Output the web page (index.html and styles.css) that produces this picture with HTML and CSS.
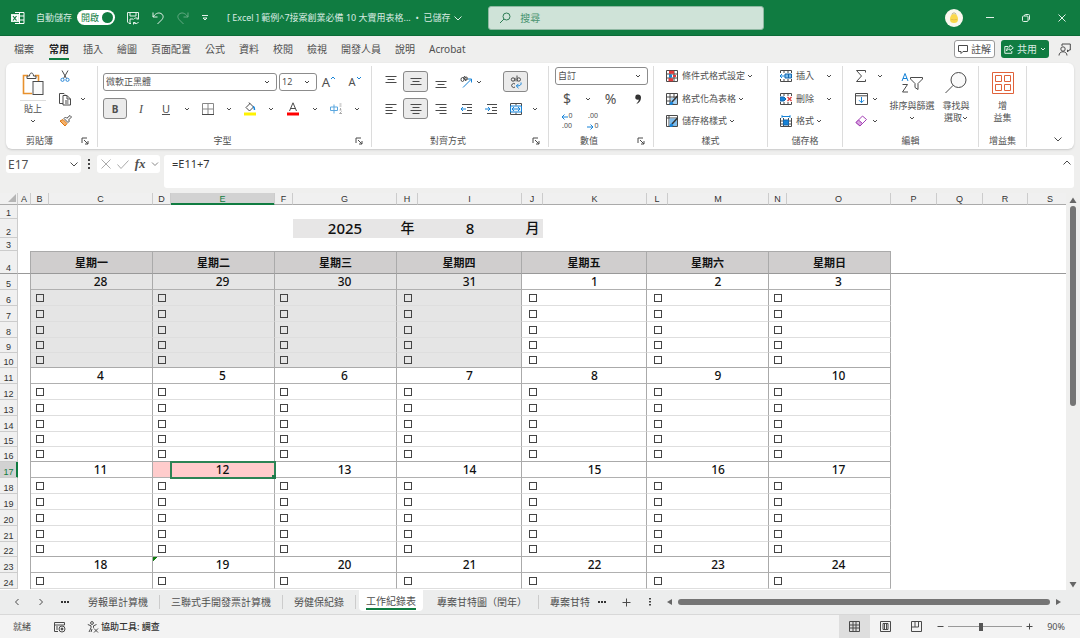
FILE: index.html
```html
<!DOCTYPE html>
<html lang="zh-Hant">
<head>
    <meta charset="UTF-8">
    <meta name="viewport" content="width=device-width, initial-scale=1.0">
    <title>Excel - 工作紀錄表</title>
    <link rel="stylesheet" href="styles.css">
</head>
<body>
    <!-- shared icons -->
    <svg class="sprite" aria-hidden="true">
        <symbol id="chev" viewBox="0 0 6 6"><path d="M1 2l2 2 2-2"/></symbol>
        <symbol id="launch" viewBox="0 0 8 8"><path d="M1 6V1h5M3 3l4 4M7 4v3H4"/></symbol>
    </svg>

    <!-- title bar -->
    <header class="titlebar">
        <svg class="logo" width="14" height="14" viewBox="0 0 14 14"><path d="M4 1.500h9v11H4M8.500 1.500v11M4 5h9M4 9h9" fill="none" stroke="#fff"/><rect y="3.500" width="7.500" height="7" fill="#fff"/><path d="M2 5l3.500 4.500M5.500 5L2 9.500" stroke="#107c41" stroke-width="1.200"/></svg>
        <span class="autosave">自動儲存</span>
        <button class="toggle">開啟<i></i></button>
        <button class="quick" aria-label="儲存"><svg width="14" height="14" viewBox="0 0 14 14"><path d="M5 12.500H3l-1.500-1.500V1.500h11V6M4 1.500V5h6V1.500M4 12V8h3M7.500 8.500a3 3 0 0 1 5-.5V6M12.500 8h-2M12.500 11a3 3 0 0 1-5 .5v2M7.500 11.500h2"/></svg></button>
        <button class="quick" aria-label="復原"><svg width="14" height="14" viewBox="0 0 14 14"><path d="M2 1.500V6h4.500M2 6c2-3 5-5 8-3.500 3 1.800 2.500 4.500.5 6.500l-4 4"/></svg></button>
        <button class="quick faded" aria-label="取消復原"><svg width="14" height="14" viewBox="0 0 14 14"><path d="M12 1.500V6H7.500M12 6c-2-3-5-5-8-3.500-3 1.800-2.500 4.500-.5 6.500l4 4"/></svg></button>
        <button class="quick small" aria-label="自訂"><svg width="8" height="8" viewBox="0 0 8 8"><path d="M1 1.500h6M2 4l2 2 2-2z"/></svg></button>
        <span class="filename">[ Excel ] 範例^7接案創業必備 10 大實用表格...&nbsp; • &nbsp;已儲存</span>
        <svg class="name-chev" width="10" height="10" viewBox="0 0 10 10"><path d="M1.500 3.500L5 7l3.500-3.500"/></svg>
        <label class="search">
            <svg width="12" height="12" viewBox="0 0 12 12"><circle cx="7.500" cy="4.500" r="3.500"/><path d="M5 7L1 11"/></svg>
            <input type="text" placeholder="搜尋" aria-label="搜尋">
        </label>
        <div class="window-buttons">
            <span class="avatar"><svg width="18" height="18" viewBox="0 0 18 18"><path d="M9 5c3 0 4 3 4 5.500S11.500 14 9 14s-4-1-4-3.500S6 5 9 5z" fill="#fbd84c" stroke="none"/><path d="M7 5.500c0-2 4-2 4 0M7 10v.8M11 10v.8" stroke="#9b8b50" stroke-width=".7" fill="none"/><path d="M8.300 10.500h1.400l-.7.900z" fill="#e8893a" stroke="none"/></svg></span>
            <button aria-label="最小化"><svg width="10" height="10" viewBox="0 0 10 10"><path d="M1 4.500h8"/></svg></button>
            <button aria-label="還原"><svg width="10" height="10" viewBox="0 0 10 10"><rect x="1.500" y="3" width="5.500" height="5.500" rx="1"/><path d="M3.500 3V2.500a1 1 0 0 1 1-1H7.500a1 1 0 0 1 1 1V6a1 1 0 0 1-1 1"/></svg></button>
            <button aria-label="關閉"><svg width="10" height="10" viewBox="0 0 10 10"><path d="M1.500 1.500l7 7M8.500 1.500l-7 7"/></svg></button>
        </div>
    </header>

    <!-- ribbon tabs -->
    <nav class="tabs">
        <button>檔案</button>
        <button class="active">常用</button>
        <button>插入</button>
        <button>繪圖</button>
        <button>頁面配置</button>
        <button>公式</button>
        <button>資料</button>
        <button>校閱</button>
        <button>檢視</button>
        <button>開發人員</button>
        <button>說明</button>
        <button>Acrobat</button>
        <div class="tab-actions">
            <button class="comment"><svg width="10" height="10" viewBox="0 0 10 10"><path d="M.5 1.500h9v6H5L3 9.500v-2H.5z"/></svg>註解</button>
            <button class="share"><svg width="10" height="10" viewBox="0 0 10 10"><path d="M4 2.500H.8v6.800h7V7M6 1l3.300 2.800L6 6.500V5C4 5 3 6 2.500 7 2.500 4.500 4 2.700 6 2.700z"/></svg>共用<svg class="chev"><use href="#chev"/></svg></button>
            <button class="present" aria-label="共同作業"><svg width="13" height="13" viewBox="0 0 13 13"><circle cx="5" cy="6" r="2.200"/><path d="M1 12.500c0-5 8-5 8 0M4 3V1h8.300v6H11l-1.500 2V7H9"/></svg></button>
        </div>
    </nav>

    <!-- ribbon -->
    <section class="ribbon">
        <div class="group clipboard">
            <div class="body split">
                <button class="big">
                    <svg width="22" height="24" viewBox="0 0 22 24"><path d="M6 3.500H1.500v18H10" stroke="#e8912d" stroke-width="1.600"/><path d="M13 3.500h3.500V9" stroke="#e8912d" stroke-width="1.600"/><path d="M5 6.500V4h2.500c0-4 4-4 4 0H14v2.500z"/><rect x="11" y="9.500" width="10" height="13" fill="#fafafa"/></svg>
                    <span class="rule"></span>
                    <span>貼上</span>
                    <svg class="chev"><use href="#chev"/></svg>
                </button>
                <div class="lines">
                    <div class="line"><button class="tool" aria-label="剪下"><svg width="12" height="12" viewBox="0 0 12 12"><path d="M3 .5l4.500 8M9 .5l-4.500 8"/><g stroke="#2b88d8"><circle cx="3.500" cy="9.800" r="1.600"/><circle cx="8.500" cy="9.800" r="1.600"/></g></svg></button></div>
                    <div class="line"><button class="tool" aria-label="複製"><svg width="14" height="14" viewBox="0 0 14 14"><path d="M5 11.500H1.500v-10H6l1 1M5 3.500h4l3.500 3.500v6H5zM9 3.500V7h3.500M7 9h3.500M7 11h3.500"/></svg></button><svg class="chev"><use href="#chev"/></svg></div>
                    <div class="line"><button class="tool" aria-label="複製格式"><svg width="13" height="12" viewBox="0 0 13 12"><path d="M1 6l5 5 2-2.500L4 4.500z" fill="#f6b26b" stroke="#d9730d"/><path d="M5 3.500l4 4 1.500-1.500-1-1L12.500 2 11 .5 7.800 3.300 6.500 2z"/></svg></button></div>
                </div>
            </div>
            <div class="caption"><span>剪貼簿</span><button aria-label="剪貼簿設定"><svg><use href="#launch"/></svg></button></div>
        </div>

        <div class="group font">
            <div class="body two">
                <div class="line">
                    <select class="face" aria-label="字型"><option>微軟正黑體</option></select>
                    <select class="size" aria-label="字型大小"><option>12</option></select>
                    <button class="tool grow" aria-label="放大字型">A<svg><path d="M1 4l2-2 2 2" stroke="#1683d8"/></svg></button>
                    <button class="tool grow less" aria-label="縮小字型">A<svg><path d="M1 2l2 2 2-2" stroke="#1683d8"/></svg></button>
                </div>
                <div class="line">
                    <button class="tool on bold">B</button>
                    <button class="tool italic">I</button>
                    <button class="tool under">U</button>
                    <svg class="chev"><use href="#chev"/></svg>
                    <button class="tool" aria-label="框線"><svg width="12" height="12" viewBox="0 0 12 12"><path d="M.5 11V.5h11V11M6 .5V11M.5 6h11" stroke="#888"/><path d="M0 11.500h12"/></svg></button>
                    <svg class="chev"><use href="#chev"/></svg>
                    <button class="tool" aria-label="填滿色彩"><svg width="12" height="14" viewBox="0 0 12 14"><path d="M2 5.500l4-4 3.500 3.500L5.500 9zM5 .5L6 2"/><path d="M9 4.500c1.500.5 1.500 2 1.500 3.500" stroke="#1683d8" stroke-width="1.500"/><path d="M0 12h12" stroke="#fff200" stroke-width="3"/></svg></button>
                    <svg class="chev"><use href="#chev"/></svg>
                    <button class="tool wide" aria-label="字型色彩"><svg width="12" height="14" viewBox="0 0 12 14"><path d="M2.500 9L6 .8 9.500 9M3.800 6.500h4.400"/><path d="M0 12h12" stroke="#f00" stroke-width="3"/></svg></button>
                    <svg class="chev"><use href="#chev"/></svg>
                    <button class="tool" aria-label="注音標示"><svg width="13" height="12" viewBox="0 0 13 12"><path d="M.5 4h7v3.500h-7zM4 1.500v9" stroke="#5ba7df"/><path d="M9.500 1h2M9.500 3h2M10.500 5v2M9.500 7h2M11.500 8.500l-2 2h2.500" stroke="#aaa"/></svg></button>
                    <svg class="chev"><use href="#chev"/></svg>
                </div>
            </div>
            <div class="caption"><span>字型</span><button aria-label="字型設定"><svg><use href="#launch"/></svg></button></div>
        </div>

        <div class="group align">
            <div class="body two">
                <div class="line">
                    <button class="tool" aria-label="靠上"><svg width="12" height="12" viewBox="0 0 12 12"><path d="M.5.5h11M2.500 3.500h7M.5 6.500h11"/></svg></button>
                    <button class="tool on" aria-label="置中對齊"><svg width="12" height="12" viewBox="0 0 12 12"><path d="M.5 2.500h11M2.500 5.500h7M.5 8.500h11"/></svg></button>
                    <button class="tool" aria-label="靠下"><svg width="12" height="12" viewBox="0 0 12 12"><path d="M.5 5.500h11M2.500 8.500h7M.5 11.500h11"/></svg></button>
                    <button class="tool" aria-label="方向"><svg width="14" height="14" viewBox="0 0 14 14"><ellipse cx="3.500" cy="4.500" rx="1.500" ry="2"/><path d="M4 2l3 4"/><circle cx="7" cy="3.500" r="1.500"/><path d="M5 1l3 3.500"/><path d="M4 12.500l8-8M9 4h3.500v3.500" stroke="#1683d8"/></svg></button>
                    <svg class="chev near"><use href="#chev"/></svg>
                    <button class="tool on" aria-label="自動換行"><svg width="12" height="14" viewBox="0 0 12 14"><circle cx="3" cy="4.500" r="1.700"/><path d="M5 2.800v3.500M7 .5v6"/><circle cx="8.800" cy="4.500" r="1.700"/><path d="M5 9a2 2 0 1 0 0 3"/><path d="M11 7.500c.5 2-.5 3.500-4.500 3.500M8.500 8.800L6.300 11l2.200 2.200" stroke="#1683d8"/></svg></button>
                </div>
                <div class="line">
                    <button class="tool" aria-label="靠左"><svg width="12" height="12" viewBox="0 0 12 12"><path d="M.5 1.500h11M.5 4.500h7M.5 7.500h11M.5 10.500h7"/></svg></button>
                    <button class="tool on" aria-label="置中"><svg width="12" height="12" viewBox="0 0 12 12"><path d="M.5 1.500h11M2.500 4.500h7M.5 7.500h11M2.500 10.500h7"/></svg></button>
                    <button class="tool" aria-label="靠右"><svg width="12" height="12" viewBox="0 0 12 12"><path d="M.5 1.500h11M4.500 4.500h7M.5 7.500h11M4.500 10.500h7"/></svg></button>
                    <button class="tool" aria-label="減少縮排"><svg width="12" height="12" viewBox="0 0 12 12"><path d="M2 1.500h10M7 4.500h5M7 7.500h5M2 10.500h10"/><path d="M6 6H1M3 4L1 6l2 2" stroke="#1683d8"/></svg></button>
                    <button class="tool" aria-label="增加縮排"><svg width="12" height="12" viewBox="0 0 12 12"><path d="M2 1.500h10M7 4.500h5M7 7.500h5M2 10.500h10"/><path d="M0 6h5M3 4l2 2-2 2" stroke="#1683d8"/></svg></button>
                    <button class="tool" aria-label="跨欄置中"><svg width="12" height="12" viewBox="0 0 12 12"><path d="M.5.5h11v11H.5zM6 .5v2M6 9.500v2"/><path d="M.5 3h11v6H.5z" fill="#eaf4fc" stroke="#1683d8"/><path d="M2 6h8M4 4L2 6l2 2M8 4l2 2-2 2" stroke="#1683d8"/></svg></button>
                    <svg class="chev end"><use href="#chev"/></svg>
                </div>
            </div>
            <div class="caption"><span>對齊方式</span><button aria-label="對齊設定"><svg><use href="#launch"/></svg></button></div>
        </div>

        <div class="group number">
            <div class="body lines">
                <div class="line"><select class="format" aria-label="數值格式"><option>自訂</option></select></div>
                <div class="line symbols">
                    <button class="tool">$</button>
                    <svg class="chev"><use href="#chev"/></svg>
                    <button class="tool wide">%</button>
                    <button class="tool wide" aria-label="千分位"><svg width="8" height="12" viewBox="0 0 8 12"><path d="M4 1.500a2.600 2.600 0 0 0-.3 5.200c.5 0 .9-.1 1.200-.3C4.700 8 4 9 2.500 10.200l.5.6C6 9.500 7 7 7 4.500 7 2.500 5.800 1.500 4 1.500z" fill="#333" stroke="none"/></svg></button>
                </div>
                <div class="line">
                    <button class="tool decimals" aria-label="增加小數位數"><span><svg width="7" height="7" viewBox="0 0 7 7"><path d="M7 4H1M3.500 1.500L1 4l2.500 2.500"/></svg>0</span><span>.00</span></button>
                    <button class="tool decimals" aria-label="減少小數位數"><span>.00</span><span><svg width="7" height="7" viewBox="0 0 7 7"><path d="M0 4h6M3.500 1.500L6 4 3.500 6.500"/></svg>0</span></button>
                </div>
            </div>
            <div class="caption"><span>數值</span><button aria-label="數值設定"><svg><use href="#launch"/></svg></button></div>
        </div>

        <div class="group named style">
            <div class="body lines">
                <button class="line"><svg width="12" height="12" viewBox="0 0 12 12"><path d="M.5.5h11v11H.5zM.5 4h11M.5 8h11M4 .5v11M8 .5v11"/><path d="M3 2.200h5M2.500 9.800H7" stroke="#e23a3a" stroke-width="3"/><path d="M3 6h3" stroke="#1683d8" stroke-width="3"/><path d="M7 6h3" stroke="#e23a3a" stroke-width="2"/></svg>條件式格式設定<svg class="chev"><use href="#chev"/></svg></button>
                <button class="line"><svg width="12" height="12" viewBox="0 0 12 12"><path d="M.5.5h11v11H.5zM.5 4h11M.5 8h11M4 .5v11M8 .5v11"/><path d="M5 5h6v6H5z" fill="#a6d0f2" stroke="none"/><path d="M11.500 3L6 9" stroke="#333" stroke-width="1.500"/><path d="M4 11.500c-.5-2 1.500-3.500 2.500-2s-.5 2.500-2.500 2z" fill="#1683d8" stroke="#1683d8"/></svg>格式化為表格<svg class="chev"><use href="#chev"/></svg></button>
                <button class="line"><svg width="12" height="12" viewBox="0 0 12 12"><path d="M.5.5h11v11H.5zM.5 3h11M3 .5v11"/><path d="M3.500 3.500h7.500V11H3.500z" fill="#7dbcec" stroke="none"/><path d="M11.500 3L6 9" stroke="#333" stroke-width="1.500"/><path d="M4 11.500c-.5-2 1.500-3.500 2.500-2s-.5 2.500-2.500 2z" fill="#1683d8" stroke="#1683d8"/></svg>儲存格樣式<svg class="chev"><use href="#chev"/></svg></button>
            </div>
            <div class="caption"><span>樣式</span></div>
        </div>

        <div class="group named cells">
            <div class="body lines">
                <button class="line"><svg width="12" height="12" viewBox="0 0 12 12"><path d="M.5 3V.5h11V3M.5 9v2.500h11V9M4 .5V3M8 .5V3M4 9v2.500M8 9v2.500"/><path d="M5 4h6.500v4H5zM8.500 4v4" fill="#7dbcec" stroke="#1567ad"/><path d="M5 6H0M2 4L0 6l2 2" stroke="#1683d8"/></svg>插入<svg class="chev far"><use href="#chev"/></svg></button>
                <button class="line"><svg width="12" height="12" viewBox="0 0 12 12"><path d="M.5 3V.5h11V3M.5 9v2.500h11V9M4 .5V3M8 .5V3M4 9v2.500M8 9v2.500"/><path d="M0 4h4l2 2-2 2H0z" fill="#1683d8" stroke="#1567ad"/><path d="M7.500 4l4 4M11.500 4l-4 4" stroke="#e23a3a" stroke-width="1.300"/></svg>刪除<svg class="chev far"><use href="#chev"/></svg></button>
                <button class="line"><svg width="12" height="12" viewBox="0 0 12 12"><path d="M.5 3v8.500h11V3M.5 6h11M.5 9h11M3.500 3v8.500M8.500 3v8.500"/><path d="M3.500 5h5v5h-5z" fill="#1683d8" stroke="#1567ad"/><path d="M2 1.500h8M2 .2v2.600M10 .2v2.600" stroke="#1683d8"/></svg>格式<svg class="chev"><use href="#chev"/></svg></button>
            </div>
            <div class="caption"><span>儲存格</span></div>
        </div>

        <div class="group edit">
            <div class="body split">
                <div class="lines">
                    <div class="line"><button class="tool" aria-label="自動加總"><svg width="12" height="12" viewBox="0 0 12 12"><path d="M10.500 2.500v-2h-9L6.500 6l-5 5.500h9v-2"/></svg></button><svg class="chev far"><use href="#chev"/></svg></div>
                    <div class="line"><button class="tool" aria-label="填滿"><svg width="13" height="12" viewBox="0 0 13 12"><path d="M.5.5h12v11H.5zM.5 2.800h12"/><path d="M6.500 4v5.500M4 7.200l2.500 2.500L9 7.200" stroke="#1683d8"/></svg></button><svg class="chev"><use href="#chev"/></svg></div>
                    <div class="line"><button class="tool" aria-label="清除"><svg width="12" height="12" viewBox="0 0 12 12"><path d="M1 7.500l6.500-6.500 4 3.500L5 11z" stroke="#a33fb5"/><path d="M1 7.500L3.500 5l4 3.500L5 11z" fill="#d9a6e0" stroke="#a33fb5"/></svg></button><svg class="chev"><use href="#chev"/></svg></div>
                </div>
                <button class="big">
                    <svg width="22" height="22" viewBox="0 0 22 22"><path d="M1 9l3-7.500L7 9M2 6.500h4" stroke="#1683d8"/><path d="M1.500 12.500H6.500l-5 7.500h5.500"/><path d="M9.500 5.500h12v1.500L17 11.500v6L14 15.500v-4L9.500 7z"/></svg>
                    <span>排序與篩選</span>
                    <svg class="chev"><use href="#chev"/></svg>
                </button>
                <button class="big">
                    <svg width="22" height="22" viewBox="0 0 22 22"><circle cx="13.500" cy="8" r="7.500" fill="#fafafa"/><path d="M8.200 13.300L.5 21"/></svg>
                    <span>尋找與</span>
                    <span>選取<svg class="chev"><use href="#chev"/></svg></span>
                </button>
            </div>
            <div class="caption"><span>編輯</span></div>
        </div>

        <div class="group addins">
            <div class="body">
                <button class="big">
                    <svg width="22" height="22" viewBox="0 0 22 22"><g stroke="#e0623a"><path d="M.5.500h21v21H.5z"/><path d="M3.500 3.500h6v6h-6zM12.500 3.500h6v6h-6zM3.500 12.500h6v6h-6zM12.500 12.500h6v6h-6z"/></g></svg>
                    <span>增</span>
                    <span>益集</span>
                </button>
            </div>
            <div class="caption"><span>增益集</span></div>
        </div>
        <button class="collapse" aria-label="摺疊功能區"><svg width="10" height="10" viewBox="0 0 10 10"><path d="M1.500 3.500L5 7l3.500-3.500"/></svg></button>
    </section>

    <!-- formula bar -->
    <section class="formula">
        <div class="namebox"><input type="text" value="E17" aria-label="名稱方塊"><svg width="10" height="10" viewBox="0 0 10 10"><path d="M1.500 3.500L5 7l3.500-3.500"/></svg></div>
        <svg class="dots" width="4" height="12" viewBox="0 0 4 12"><path d="M1 1h2v2H1zM1 5h2v2H1zM1 9h2v2H1z" fill="#444" stroke="none"/></svg>
        <div class="fx">
            <svg width="12" height="12" viewBox="0 0 12 12"><path d="M1.500 1.500l9 9M10.500 1.500l-9 9" stroke="#aaa"/></svg>
            <svg width="12" height="12" viewBox="0 0 12 12"><path d="M.5 6.500l3.500 4 7.500-8" stroke="#aaa"/></svg>
            <button>fx</button>
            <svg width="8" height="10" viewBox="0 0 8 10"><path d="M1 3.500l3 3 3-3" stroke="#888"/></svg>
        </div>
        <div class="formula-input"><input type="text" value="=E11+7" aria-label="公式"><svg width="10" height="10" viewBox="0 0 10 10"><path d="M1.500 6.500L5 3l3.500 3.500"/></svg></div>
    </section>

    <!-- sheet -->
    <main class="sheet">
        <div class="grid">
            <table>
                <colgroup id="cols"></colgroup>
                <thead><tr id="letters"></tr></thead>
                <tbody id="cells"></tbody>
            </table>
        </div>
        <div class="vscroll">
            <svg width="8" height="8" viewBox="0 0 8 8"><path d="M4 1.500L7.500 7h-7z"/></svg>
            <i></i>
            <svg width="8" height="8" viewBox="0 0 8 8"><path d="M4 6.500L.5 1h7z"/></svg>
        </div>
    </main>

    <!-- sheet tabs -->
    <nav class="sheets">
        <button class="nav" aria-label="上一張"><svg width="8" height="8" viewBox="0 0 8 8"><path d="M5.500 1l-3 3 3 3"/></svg></button>
        <button class="nav" aria-label="下一張"><svg width="8" height="8" viewBox="0 0 8 8"><path d="M2.500 1l3 3-3 3"/></svg></button>
        <button class="nav" aria-label="更多"><svg width="10" height="4" viewBox="0 0 10 4"><path d="M1 1h2v2H1zM4 1h2v2H4zM7 1h2v2H7z" fill="#333" stroke="none"/></svg></button>
        <button class="name">勞報單計算機</button>
        <button class="name">三聯式手開發票計算機</button>
        <button class="name">勞健保紀錄</button>
        <button class="name current"><span>工作紀錄表</span></button>
        <button class="name">專案甘特圖（閏年）</button>
        <button class="name last">專案甘特</button>
        <button class="nav" aria-label="其他工作表"><svg width="10" height="4" viewBox="0 0 10 4"><path d="M1 1h2v2H1zM4 1h2v2H4zM7 1h2v2H7z" fill="#333" stroke="none"/></svg></button>
        <button class="nav" aria-label="新增工作表"><svg width="9" height="9" viewBox="0 0 9 9"><path d="M4.500.5v8M.5 4.500h8"/></svg></button>
        <button class="nav" aria-label="調整"><svg width="4" height="10" viewBox="0 0 4 10"><path d="M1 1h2v1.500H1zM1 4h2v1.500H1zM1 7h2v1.500H1z" fill="#444" stroke="none"/></svg></button>
        <div class="hscroll">
            <svg width="8" height="8" viewBox="0 0 8 8"><path d="M1 4l5-3v6z"/></svg>
            <i></i>
            <svg width="8" height="8" viewBox="0 0 8 8"><path d="M7 4L2 1v6z"/></svg>
        </div>
    </nav>

    <!-- status bar -->
    <footer class="status">
        <span class="ready">就緒</span>
        <svg class="macro" width="12" height="12" viewBox="0 0 12 12"><path d="M4 10.500H.5v-9h10V4M.5 4h10M2 6h2M2 8h2"/><circle cx="8" cy="8" r="3"/><circle cx="8" cy="8" r="1" fill="#444"/></svg>
        <button class="access"><svg width="12" height="12" viewBox="0 0 12 12"><circle cx="5" cy="2" r="1.400"/><path d="M.8 3.500L4 4.800v2L2 11M9.500 3.500L6.500 4.800v2M5 8l-1 3M7 7.500l4 4M11 7.500l-4 4"/></svg>協助工具: 調查</button>
        <div class="views">
            <button class="on" aria-label="標準模式"><svg width="11" height="11" viewBox="0 0 11 11"><path d="M.5.5h10v10H.5zM.5 4h10M.5 7h10M4 .5v10M7 .5v10"/></svg></button>
            <button aria-label="整頁模式"><svg width="11" height="11" viewBox="0 0 11 11"><path d="M.5.5h10v10H.5zM3 2.500h5v6H3zM4.500 2.500v6M6.500 2.500v6"/></svg></button>
            <button aria-label="分頁預覽"><svg width="11" height="11" viewBox="0 0 11 11"><path d="M.5.5h10v10H.5zM.5 6h7V.5M4 .5V6"/></svg></button>
        </div>
        <button class="zoom-step" aria-label="縮小"><svg width="7" height="7" viewBox="0 0 7 7"><path d="M.5 3.500h6"/></svg></button>
        <input class="zoom" type="range" min="10" max="190" value="90" aria-label="縮放">
        <button class="zoom-step" aria-label="放大"><svg width="7" height="7" viewBox="0 0 7 7"><path d="M.5 3.500h6M3.500.5v6"/></svg></button>
        <span class="percent">90%</span>
    </footer>
    <script src="script.js"></script>
</body>
</html>
```

FILE: styles.css
```css
* {
    box-sizing: border-box;
}
body {
    margin: 0;
    height: 100vh;
    display: flex;
    flex-direction: column;
    overflow: hidden;
    background-color: #efefee;
    color: #505050;
    font: 9px/12px "Noto Sans", "Noto Sans CJK TC", sans-serif;
}
button, input, select {
    margin: 0;
    padding: 0;
    border: 0;
    background: none;
    color: inherit;
    font: inherit;
}
button {
    display: flex;
    align-items: center;
    justify-content: center;
    white-space: nowrap;
}
svg {
    display: block;
    flex: none;
    fill: none;
    stroke: #4a4a4a;
}
.sprite {
    position: absolute;
    width: 0;
    height: 0;
}
.chev {
    width: 6px;
    height: 6px;
}

/* title bar */
.titlebar {
    position: relative;
    height: 36px;
    display: flex;
    align-items: center;
    padding-left: 11px;
    background: #107c41;
    border-bottom: 1px solid #0c6b37;
    color: #d9ebe1;
}
.titlebar svg {
    stroke: #e3f1e9;
}
.autosave {
    margin: 0 5px 0 11px;
}
.toggle {
    width: 38px;
    height: 15px;
    justify-content: space-between;
    padding: 0 2px 0 4px;
    border-radius: 8px;
    background: #fff;
    color: #107c41;
}
.toggle i {
    width: 11px;
    height: 11px;
    border-radius: 50%;
    background: #107c41;
}
.quick {
    width: 14px;
    margin-left: 11px;
}
.quick.small {
    width: 8px;
}
.faded {
    opacity: .4;
}
.filename {
    margin: 0 2px 0 18px;
}
.search {
    position: absolute;
    left: 45.2%;
    width: 25.5%;
    height: 24px;
    display: flex;
    align-items: center;
    gap: 9px;
    padding-left: 10px;
    border: 1px solid #8fb8a2;
    border-radius: 3px;
    background: #cfe3d8;
}
.search svg {
    stroke: #2f7d55;
}
.search input {
    flex: 1;
    font-size: 10px;
    outline: 0;
}
.search input::placeholder {
    color: #4a9470;
}
.window-buttons {
    display: flex;
    align-items: center;
    margin-left: auto;
}
.window-buttons button {
    width: 36px;
    height: 35px;
}
.avatar {
    width: 18px;
    height: 18px;
    margin-right: 9px;
    border-radius: 50%;
    background: #fbf8ee;
}

/* ribbon tabs */
.tabs {
    height: 27px;
    display: flex;
    gap: 14px;
    padding-left: 14px;
    font-size: 10px;
}
.tabs > button {
    height: 24px;
    padding-top: 3px;
    border-bottom: 2px solid transparent;
}
.tabs .active {
    margin-left: 1px;
    border-color: #107c41;
    color: #222;
    font-weight: 700;
}
.tab-actions {
    height: 26px;
    display: flex;
    align-items: center;
    gap: 6px;
    margin-left: auto;
    padding-right: 7px;
}
.tab-actions button {
    height: 18px;
    gap: 3px;
    border-radius: 3px;
}
.tab-actions .comment {
    width: 41px;
    border: 1px solid #999;
    background: #fff;
}
.tab-actions .share {
    width: 48px;
    background: #107c41;
    color: #d9ebe1;
}
.share svg {
    stroke: #e3f1e9;
}
.tab-actions .present {
    width: 18px;
}

/* ribbon */
.ribbon {
    height: 86px;
    display: flex;
    margin: 0 6px;
    border-radius: 6px;
    background: #fff;
    box-shadow: 0 1px 2px #c8c8c8;
}
.group {
    display: flex;
    flex-direction: column;
    margin: 3px 0 2px;
    border-right: 1px solid #dcdcdc;
}
.clipboard {
    width: 92px;
}
.font {
    width: 274px;
}
.align {
    width: 177px;
}
.number {
    width: 105px;
}
.style {
    width: 114px;
}
.cells {
    width: 75px;
}
.edit {
    width: 136px;
}
.addins {
    width: 48px;
}
.body {
    flex: 1;
}
.caption {
    height: 12px;
    display: flex;
    margin-top: auto;
}
.caption span {
    flex: 1;
    text-align: center;
}
.caption button {
    width: 24px;
}
.caption svg {
    width: 8px;
    height: 8px;
}
.line {
    height: 20px;
    display: flex;
    align-items: center;
}
.lines {
    height: 65px;
    flex: none;
    display: flex;
    flex-direction: column;
    justify-content: space-between;
}
.split {
    display: flex;
}
.two {
    padding: 5px 0 0 5px;
}
.two .line {
    height: 21px;
    margin-bottom: 6px;
}
.tool {
    width: 22px;
    height: 21px;
}
.on {
    border: 1px solid #888;
    border-radius: 3px;
    background: #ebebeb;
}
.big {
    flex-direction: column;
    justify-content: flex-start;
    padding-top: 6px;
}
.big span {
    display: flex;
    align-items: center;
}
.big > svg:first-child {
    margin-bottom: 6px;
}
.clipboard .big {
    width: 54px;
}
.clipboard .big > svg:first-child {
    margin-bottom: 4px;
}
.clipboard .rule {
    width: 26px;
    margin-bottom: 2px;
    border-top: 1px solid #ddd;
}
.clipboard .tool {
    width: 10px;
}
.clipboard .line .chev {
    margin-left: 10px;
}
.clipboard .big .chev {
    margin-top: 3px;
}
select {
    height: 18px;
    padding-left: 2px;
    border: 1px solid #8c8c8c;
    border-radius: 3px;
    appearance: none;
    background: #fff url("data:image/svg+xml,%3Csvg xmlns='http://www.w3.org/2000/svg' width='6' height='6'%3E%3Cpath d='M1 2l2 2 2-2' fill='none' stroke='%23444'/%3E%3C/svg%3E") no-repeat right 6px center;
}
.face {
    width: 174px;
    margin-right: 2px;
}
.size {
    width: 38px;
}
.format {
    width: 93px;
}
.grow {
    width: 24px;
    font-size: 13px;
}
.grow svg {
    width: 6px;
    height: 6px;
    margin-bottom: 7px;
}
.less {
    margin-left: 2px;
    font-size: 11px;
}
.font .chev {
    width: 20px;
}
.wide {
    width: 24px;
}
.bold {
    width: 24px;
    font-size: 10px;
    font-weight: 700;
}
.italic {
    width: 28px;
    font: italic 12px/12px "Liberation Serif", serif;
}
.under {
    font-size: 11px;
    text-decoration: underline;
}
.align .body {
    padding-left: 6px;
}
.align .tool {
    width: 25px;
}
.align .chev.near {
    margin: 0 21px 0 -2px;
}
.align .chev.end {
    width: 14px;
}
.number .body {
    padding-left: 6px;
}
.symbols {
    font-size: 14px;
}
.number .tool {
    width: 24px;
}
.number .chev {
    width: 18px;
}
.number .wide {
    width: 27px;
}
.number .decimals {
    flex-direction: column;
    font-size: 7px;
    line-height: 10px;
}
.decimals + .decimals {
    margin-left: 2px;
}
.decimals span {
    display: flex;
    align-items: center;
}
.decimals svg {
    stroke: #1683d8;
}
.named .body {
    padding-left: 12px;
}
.named .line {
    justify-content: flex-start;
    gap: 4px;
}
.named .line .chev {
    margin-left: -2px;
}
.named .line .chev.far {
    margin-left: 8px;
}
.edit .lines {
    width: 44px;
    padding-left: 7px;
}
.edit .line .chev.far {
    margin-left: 5px;
}
.edit .big {
    width: 50px;
}
.edit .big:last-child {
    width: 42px;
    margin-left: -2px;
}
.edit .big > .chev {
    margin-top: 3px;
}
.addins .big {
    width: 100%;
}
.collapse {
    align-self: flex-end;
    margin: 0 11px 5px auto;
}

/* formula bar */
.formula {
    display: flex;
    align-items: flex-start;
    padding: 6px 6px 0;
    font-size: 12px;
}
.namebox, .fx {
    height: 18px;
    display: flex;
    align-items: center;
    border-radius: 3px;
    background: #fff;
}
.namebox {
    width: 75px;
    padding: 0 2px;
}
.namebox input {
    flex: 1;
    min-width: 0;
}
.dots {
    margin: 3px 6px 0;
}
.fx {
    width: 63px;
    justify-content: space-between;
    padding: 0 1px 0 3px;
}
.fx button {
    font: italic 700 13px/14px "Liberation Serif", serif;
}
.formula-input {
    flex: 1;
    height: 33px;
    display: flex;
    align-items: flex-start;
    margin-left: 4px;
    padding: 3px 2px 0 8px;
    border-radius: 3px;
    background: #fff;
    color: #333;
    font-size: 11px;
}
.formula-input input {
    flex: 1;
}

/* sheet */
.sheet {
    flex: 1;
    min-height: 0;
    display: flex;
    margin-top: 5px;
}
.grid {
    flex: 1;
    min-width: 0;
    overflow: hidden;
    background: #fff;
}
table {
    width: 100%;
    min-width: 1073px;
    table-layout: fixed;
    border-spacing: 0;
    color: #111;
    font-size: 12px;
    line-height: 12px;
    text-align: center;
}
td, th {
    height: 16px;
    padding: 0;
    overflow: hidden;
}
thead th, .rownum {
    border-right: 1px solid #ccc;
    border-bottom: 1px solid #ccc;
    background: #f0f0f0;
    color: #333;
    font: 9px/10px "Liberation Sans", sans-serif;
}
thead th {
    height: 12px;
    border-bottom-color: #aaa;
}
.rownum {
    vertical-align: bottom;
}
thead th.picked {
    background: #d2d2d2;
    box-shadow: inset 0 -1px #107c41;
    border-bottom-color: #107c41;
    color: #107c41;
}
.rownum.picked {
    background: #d2d2d2;
    box-shadow: inset -1px 0 #107c41;
    border-right-color: #107c41;
    color: #107c41;
}
.corner svg {
    margin-left: auto;
    fill: #b5b5b5;
    stroke: none;
}
.short td, .short th {
    height: 14px;
}
.shorter td, .shorter th {
    height: 13px;
}
.month td, .month th {
    height: 19px;
}
.month td {
    padding-bottom: 2px;
    font-size: 15px;
    font-weight: 500;
}
.month .kanji {
    font-size: 14px;
}
.month .fill {
    background: #e7e6e6;
}
.weekdays td, .weekdays th {
    height: 23px;
    border-bottom: 1px solid #999;
}
.weekdays .day {
    border-top: 1px solid #aaa;
    background: #d0cece;
    font-size: 11px;
    font-weight: 700;
}
.tight td, .tight th {
    height: 15px;
}
.line-right {
    border-right: 1px solid #aaa;
}
.dates td {
    font-weight: 500;
}
.dates .in {
    border-bottom: 1px solid #b0b0b0;
}
.tasks .in {
    border-bottom: 1px solid #dedede;
}
.tasks.end .in {
    border-bottom-color: #aaa;
}
.past {
    background: #e5e5e5;
}
.today {
    background: #ffcccc;
}
.selected {
    position: relative;
    overflow: visible;
    outline: 2px solid #2b8455;
    outline-offset: -1px;
}
.selected::after {
    content: "";
    position: absolute;
    right: -2px;
    bottom: -2px;
    width: 4px;
    height: 4px;
    background: #1f7a4a;
}
.flag {
    background: linear-gradient(135deg, #107c10 3px, transparent 3px);
}
td input {
    display: block;
    width: 8px;
    height: 8px;
    margin: 0 auto;
    border: 1px solid #444;
    appearance: none;
}
.vscroll {
    width: 14px;
    display: flex;
    flex-direction: column;
    align-items: center;
    padding: 3px 0 1px;
}
.vscroll svg, .hscroll svg {
    fill: #666;
    stroke: none;
}
.vscroll i {
    width: 6px;
    height: 51%;
    margin: 2px 0 auto;
    border-radius: 3px;
    background: #757575;
}

/* sheet tabs */
.sheets {
    height: 25px;
    display: flex;
    align-items: center;
    padding: 0 18px 0 5px;
    border-bottom: 1px solid #d8d8d8;
    background: #eceded;
    font-size: 10px;
}
.nav {
    width: 24px;
    height: 24px;
}
.name {
    height: 14px;
    padding: 0 11px;
    border-right: 1px solid #ccc;
}
.name.last {
    padding-right: 0;
    border: 0;
}
.name.current {
    height: 21px;
    align-self: flex-start;
    margin: 0 3px;
    padding: 0 7px;
    border: 0;
    border-radius: 0 0 4px 4px;
    background: #fff;
}
.current span {
    height: 18px;
    line-height: 18px;
    border-bottom: 2px solid #107c41;
}
.hscroll {
    flex: 1;
    display: flex;
    align-items: center;
    gap: 4px;
    margin-left: 4px;
}
.hscroll i {
    flex: 1;
    height: 6px;
    border-radius: 3px;
    background: #757575;
}

/* status bar */
.status {
    height: 23px;
    display: flex;
    align-items: center;
    padding: 0 15px 0 13px;
    background: #f3f3f3;
}
.macro {
    margin: 0 21px 0 23px;
}
.access {
    gap: 2px;
    color: #333;
    font-weight: 500;
}
.views {
    display: flex;
    margin-left: auto;
}
.views button {
    width: 31px;
    height: 23px;
    border: 0;
    border-radius: 0;
}
.views .on {
    background: #dedede;
}
.zoom-step {
    width: 7px;
    margin: 0 4px;
}
.zoom {
    width: 74px;
    height: 10px;
    appearance: none;
    background: linear-gradient(#999, #999) center / 100% 1px no-repeat;
}
.zoom::-webkit-slider-thumb {
    width: 4px;
    height: 8px;
    appearance: none;
    background: #555;
}
.percent {
    margin-left: 10px;
}
.views + .zoom-step {
    margin-left: 5px;
}
```

FILE: script.js
```
var letters = 'ABCDEFGHIJKLMNOPQRS'.split('');
var widths = [18, 13, 18, 104, 18, 104, 18, 104, 21, 104, 21, 104, 21, 101, 18, 104, 46, 46, 45];
var weekdays = ['一', '二', '三', '四', '五', '六', '日'];
var weeks = [
    [28, 29, 30, 31, 1, 2, 3],
    [4, 5, 6, 7, 8, 9, 10],
    [11, 12, 13, 14, 15, 16, 17],
    [18, 19, 20, 21, 22, 23, 24]
];
var rowNumber = 0;
var html = '';

// One row: number on the left, then the cells
function addRow(className, cells) {
    rowNumber++;
    var picked = rowNumber === 17 ? ' picked' : '';
    html += `<tr class="${className}"><th class="rownum${picked}">${rowNumber}</th>${cells}</tr>`;
}

// Row of the calendar, draw(i) gives the two cells of a day
function addCalendarRow(className, draw) {
    var cells = '<td class="line-right"></td>';
    for (var i = 0; i < 7; i++) {
        cells += draw(i);
    }
    addRow(className, cells + '<td colspan="4"></td>');
}

// Columns
document.getElementById('cols').innerHTML = widths.map(w => `<col style="width: ${w}px">`).join('') + '<col>';
document.getElementById('letters').innerHTML =
    '<th class="corner"><svg width="9" height="9" viewBox="0 0 9 9"><path d="M8 0v8H0z"/></svg></th>' +
    letters.map(l => `<th class="${l === 'E' ? 'picked' : ''}">${l}</th>`).join('');

// Title rows
addRow('short', '<td colspan="19"></td>');
addRow('month', '<td colspan="6"></td><td class="fill">2025</td><td class="fill kanji">年</td>' +
    '<td class="fill">8</td><td class="fill kanji">月</td><td colspan="9"></td>');
addRow('shorter', '<td colspan="19"></td>');
addCalendarRow('weekdays', i => `<td class="day line-right" colspan="2">星期${weekdays[i]}</td>`);

// Weeks
weeks.forEach(function (week, w) {
    addCalendarRow('dates', function (i) {
        var fill = w === 0 && i < 4 ? 'past' : '';
        var selected = '';
        if (week[i] === 12) {
            fill = 'today';
            selected = 'selected';
        }
        var flag = week[i] === 19 ? 'flag' : '';
        return `<td class="in ${fill} ${flag}"></td><td class="in line-right ${fill} ${selected}">${week[i]}</td>`;
    });
    var count = w === 3 ? 1 : 5;
    var firstTight = w === 2 ? 4 : 3;
    for (var t = 0; t < count; t++) {
        var name = 'tasks' + (t >= firstTight ? ' tight' : '') + (t === 4 ? ' end' : '');
        addCalendarRow(name, function (i) {
            var fill = w === 0 && i < 4 ? 'past' : '';
            return `<td class="in ${fill}"><input type="checkbox" aria-label="${week[i]} 日工作"></td>` +
                `<td class="in line-right ${fill}"></td>`;
        });
    }
});
document.getElementById('cells').innerHTML = html;
```
